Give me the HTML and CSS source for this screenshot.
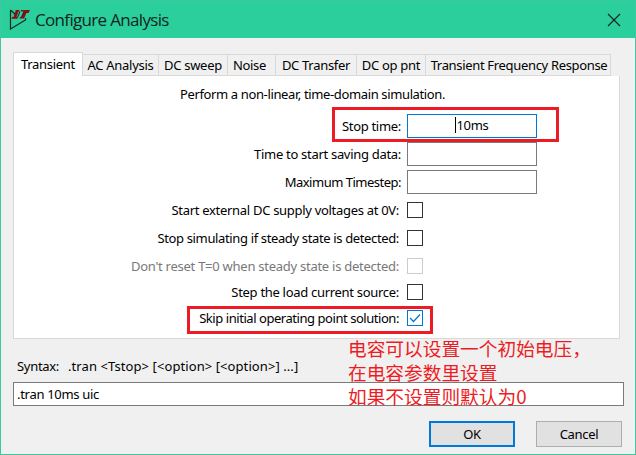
FILE: index.html
```html
<!DOCTYPE html>
<html lang="en">
<head>
<meta charset="utf-8">
<title>Configure Analysis</title>
<link rel="stylesheet" href="styles.css">
</head>
<body>
<div class="window">
  <header class="titlebar">
    <svg class="logo" width="22" height="22" viewBox="0 0 22 22">
      <path d="M1.500 1v19L16.500 11V9M1.500 1l5 4.500" fill="none" stroke="#10251e" stroke-width="1.200"/>
      <path d="M6.500 1h4v1.500h-1L7.500 8h1v1.800H2.500L3 8h1.500l2-5.500zM12 1h9l-1.500 3h-2l-2.500 5.500h-4.500L11 8h1.500l2.500-5.500h-3z" fill="#8b0c12"/>
      <path d="M11 2.500L8.500 8.500M15 2.500L12.500 8" stroke="#10251e" fill="none"/>
    </svg>
    <h1 class="title">Configure Analysis</h1>
    <svg class="close" width="14" height="14" viewBox="0 0 14 14"><path d="M1 1l12 12M13 1L1 13" stroke="#10251e" stroke-width="1.100"/></svg>
  </header>
  <main class="content">
    <nav class="tabs">
      <div class="tab active"><span>Transient</span></div>
      <div class="tab ac"><span>AC Analysis</span></div>
      <div class="tab sweep"><span>DC sweep</span></div>
      <div class="tab noise"><span>Noise</span></div>
      <div class="tab transfer"><span>DC Transfer</span></div>
      <div class="tab op"><span>DC op pnt</span></div>
      <div class="tab freq"><span>Transient Frequency Response</span></div>
    </nav>
    <section class="panel">
      <p class="intro"><span>Perform a non-linear, time-domain simulation.</span></p>
      <div class="form">
        <label class="wide"><span>Stop time:</span></label><div class="field focus"><i class="caret"></i><span>10ms</span></div>
        <label class="wide"><span>Time to start saving data:</span></label><div class="field"></div>
        <label class="wide timestep"><span>Maximum Timestep:</span></label><div class="field"></div>
        <label><span>Start external DC supply voltages at 0V:</span></label><div class="check"></div>
        <label class="steady"><span>Stop simulating if steady state is detected:</span></label><div class="check"></div>
        <label class="disabled"><span>Don't reset T=0 when steady state is detected:</span></label><div class="check off"></div>
        <label><span>Step the load current source:</span></label><div class="check"></div>
        <label class="skip"><span>Skip initial operating point solution:</span></label>
        <div class="check on"><svg width="14" height="14" viewBox="0 0 14 14"><path d="M2 7l3.500 3.500L12 3.500" fill="none" stroke="#0078d7" stroke-width="1.300"/></svg></div>
      </div>
    </section>
    <p class="syntax"><span class="s-label">Syntax:</span><span class="s-text">.tran &lt;Tstop&gt; [&lt;option&gt; [&lt;option&gt;] ...]</span></p>
    <div class="command"><span>.tran 10ms uic</span></div>
    <footer class="actions">
      <div class="button primary"><span>OK</span></div>
      <div class="button"><span>Cancel</span></div>
    </footer>
  </main>
  <div class="mark mark-stop"></div>
  <div class="mark mark-skip"></div>
  <div class="note" lang="zh-CN">电容可以设置一个初始电压，<br>在电容参数里设置<br>如果不设置则默认为0</div>
</div>
</body>
</html>
```
FILE: styles.css
```css
* { box-sizing: border-box; }
body { margin: 0; }
.window {
  position: relative;
  width: 636px;
  height: 455px;
  border: 1px solid #3cc9a0;
  background: #f0f0f0;
  color: #000;
  font: 13px/18px "Noto Sans", "Noto Sans CJK SC", sans-serif;
  letter-spacing: -0.3px;
  white-space: nowrap;
  overflow: hidden;
}
.titlebar {
  display: flex;
  align-items: center;
  height: 37px;
  padding: 0 14px 0 8px;
  background: #2bcf9c;
}
.logo { margin-right: 4px; }
.title {
  flex: 1;
  margin: 0;
  font: 400 17px/24px "Open Sans", sans-serif;
  letter-spacing: -0.67px;
  color: #10251e;
}
.content { padding: 14px 11px 0 12px; }
.tabs { display: flex; align-items: flex-end; height: 24px; }
.tab {
  display: flex;
  align-items: center;
  justify-content: center;
  height: 22px;
  border: 1px solid #d9d9d9;
  border-left: 0;
}
.tab.active {
  width: 70px;
  height: 24px;
  padding-bottom: 2px;
  border: 1px solid #d9d9d9;
  border-bottom: 0;
  background: #fff;
}
.ac { width: 76px; }
.sweep { width: 69px; }
.noise { width: 48px; padding-right: 4px; }
.transfer { width: 81px; }
.op { width: 69px; }
.freq { width: 185px; padding-left: 2px; letter-spacing: -0.33px; }
.panel {
  width: 607px;
  height: 263px;
  border: 1px solid #d9d9d9;
  border-top: 0;
  background: #fff;
}
.intro { margin: 0; padding: 9px 0 0 166px; height: 36px; letter-spacing: -0.37px; }
.form {
  display: grid;
  grid-template-columns: 387px 130px;
  grid-template-rows: repeat(6, 28px) 24px 28px;
  column-gap: 6px;
  align-items: center;
}
label { padding-right: 2px; text-align: right; }
label.wide { padding-right: 0; }
label.timestep { letter-spacing: -0.5px; }
label.steady { letter-spacing: -0.36px; }
label.skip { letter-spacing: -0.45px; }
label.disabled { color: #787878; letter-spacing: -0.26px; }
.field {
  display: flex;
  align-items: center;
  justify-content: center;
  height: 24px;
  border: 1px solid #7a7a7a;
}
.field.focus { border-color: #0078d7; padding-bottom: 2px; }
.caret { width: 1px; height: 16px; background: #000; }
.check { width: 16px; height: 16px; border: 1px solid #333; }
.check.off { border-color: #ccc; }
.check.on { border-color: #0078d7; }
.check svg { display: block; }
.syntax { display: flex; margin: 0; padding: 18px 0 0 4px; height: 43px; }
.s-label { width: 51px; }
.s-text { letter-spacing: 0.08px; }
.command {
  display: flex;
  align-items: center;
  width: 611px;
  height: 24px;
  padding-left: 3px;
  border: 1px solid #7a7a7a;
  background: #fff;
}
.actions { display: flex; justify-content: flex-end; gap: 21px; padding: 15px 2px 0 0; }
.button {
  display: flex;
  align-items: center;
  justify-content: center;
  width: 86px;
  height: 26px;
  border: 1px solid #adadad;
  background: #e1e1e1;
}
.button.primary { border: 2px solid #0078d7; }
.mark { position: absolute; border: 3px solid #ed1c24; }
.mark-stop { left: 331px; top: 106px; width: 227px; height: 35px; }
.mark-skip { left: 186px; top: 305px; width: 246px; height: 28px; }
.note {
  position: absolute;
  left: 347px;
  top: 335px;
  color: #ed1c24;
  font: 400 18.700px/24px "Noto Sans CJK SC", sans-serif;
  letter-spacing: 0;
}
```
